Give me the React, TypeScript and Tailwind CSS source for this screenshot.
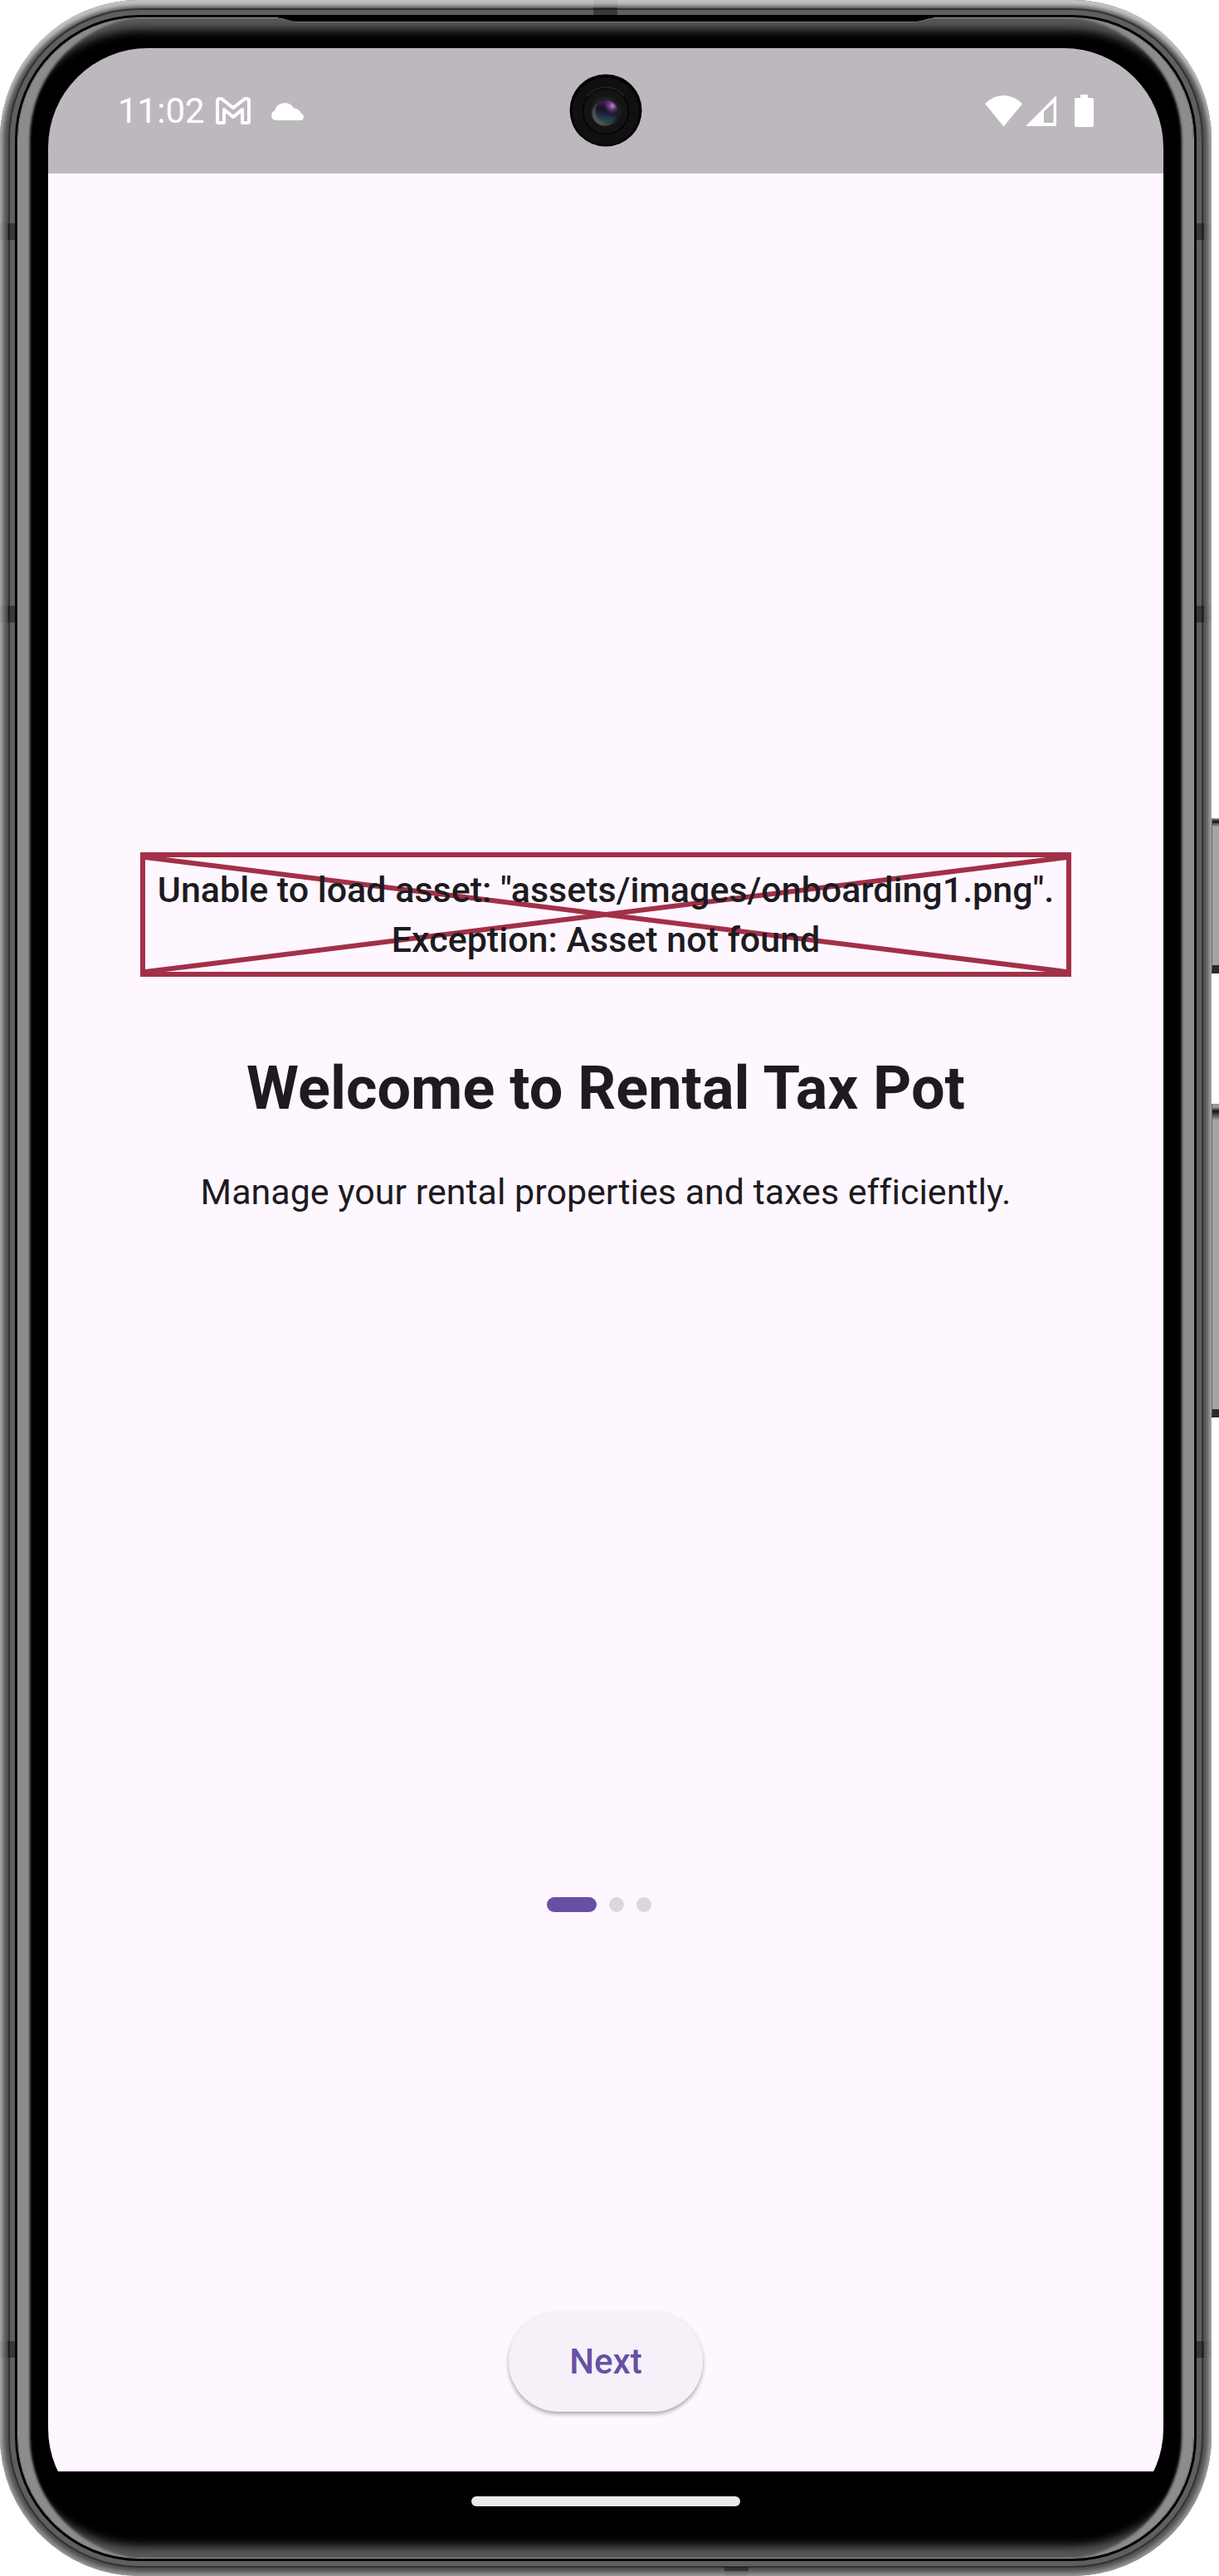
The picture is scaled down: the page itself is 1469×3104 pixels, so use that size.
import React from "react";

function GmailIcon() {
  return (
    <svg viewBox="0 0 42 34" className="h-[34px] w-[42px]" fill="none" stroke="currentColor" strokeWidth="4" strokeLinejoin="round" aria-label="Gmail">
      <path d="M2 5Q2 2 5 2H7L21 13L35 2H37Q40 2 40 5V30Q40 31 38 31H32V15L21 24L10 15V31H4Q2 31 2 30Z" />
    </svg>
  );
}

function CloudIcon() {
  return (
    <svg viewBox="0 0 42 24" className="h-6 w-[42px]" fill="currentColor" aria-label="Cloud">
      <path d="M6 23A6 6 0 0 1 5 11.500A12.500 12.500 0 0 1 28 8.500A9 9 0 0 1 37 15A4.200 4.200 0 0 1 37 23Z" />
    </svg>
  );
}

function WifiIcon() {
  return (
    <svg viewBox="0 0 45 39" className="h-[39px] w-[45px]" fill="currentColor" aria-label="Wi-Fi">
      <path d="M0 11Q10 1 22.500 1Q35 1 45 11L22.500 38.500Z" />
    </svg>
  );
}

function SignalIcon() {
  return (
    <svg viewBox="0 0 38 38" className="h-[37px] w-[37px]" fill="currentColor" fillRule="evenodd" aria-label="Signal">
      <path d="M0 38L38 0V38ZM22.500 20V34H34.500V9Z" />
    </svg>
  );
}

function BatteryIcon() {
  return (
    <svg viewBox="0 0 23 39" className="h-[39px] w-[23px]" fill="currentColor" aria-label="Battery">
      <path d="M7 0H16V4H21Q23 4 23 6V37Q23 39 21 39H2Q0 39 0 37V6Q0 4 2 4H7Z" />
    </svg>
  );
}

function Camera() {
  return (
    <svg viewBox="0 0 88 88" className="h-[88px] w-[88px]" aria-hidden="true">
      <defs>
        <radialGradient id="ring">
          <stop offset="0.55" stopColor="#2c2c2c" />
          <stop offset="1" stopColor="#131313" />
        </radialGradient>
        <linearGradient id="barrel" x1="0" y1="1" x2="1" y2="0">
          <stop offset="0" stopColor="#6a6a6a" />
          <stop offset="0.6" stopColor="#222" />
          <stop offset="1" stopColor="#1a1a1a" />
        </linearGradient>
        <linearGradient id="lens" x1="0.6" y1="0" x2="0.4" y2="1">
          <stop offset="0" stopColor="#4a2658" />
          <stop offset="0.45" stopColor="#1a1028" />
          <stop offset="1" stopColor="#1f4f62" />
        </linearGradient>
        <radialGradient id="glint" cx="0.76" cy="0.26" r="0.36">
          <stop offset="0" stopColor="#d497e6" stopOpacity="0.9" />
          <stop offset="0.5" stopColor="#9a56b4" stopOpacity="0.5" />
          <stop offset="1" stopColor="#9a56b4" stopOpacity="0" />
        </radialGradient>
      </defs>
      <circle cx="44" cy="44" r="43.500" fill="#000" />
      <circle cx="44" cy="45" r="40.500" fill="#101010" />
      <circle cx="44" cy="45" r="27.500" fill="#141414" stroke="#060606" strokeWidth="2" />
      <path d="M22 27A28 28 0 0 1 66 27" fill="none" stroke="#262626" strokeWidth="1.500" />
      <circle cx="44" cy="45" r="20" fill="url(#ring)" />
      <circle cx="43" cy="47" r="15.500" fill="url(#barrel)" />
      <circle cx="45" cy="45" r="13" fill="url(#lens)" />
      <circle cx="45" cy="45" r="13" fill="url(#glint)" />
    </svg>
  );
}

function StatusBar() {
  return (
    <header className="relative flex h-[151px] shrink-0 items-center justify-between bg-[#bdb8be] pl-[84px] pr-[84px] text-white">
      <div className="flex items-center">
        <time className="w-[118px] text-[42px] leading-[48px]">11:02</time>
        <GmailIcon />
        <span className="ml-6 flex">
          <CloudIcon />
        </span>
      </div>
      <div className="flex items-center">
        <WifiIcon />
        <span className="ml-1 mr-[22px] flex">
          <SignalIcon />
        </span>
        <BatteryIcon />
      </div>
      <div className="absolute inset-x-0 top-[31px] flex justify-center">
        <Camera />
      </div>
    </header>
  );
}

function MissingAsset() {
  return (
    <div className="relative w-full whitespace-nowrap border-[6px] border-[#a23048] py-[9px] text-center text-[43px] font-medium leading-[60px]">
      <svg className="absolute inset-0 h-full w-full" viewBox="0 0 1110 138" preserveAspectRatio="none" stroke="#a23048" strokeWidth="6" aria-hidden="true">
        <path d="M0 0L1110 138M1110 0L0 138" />
      </svg>
      <p className="relative">
        Unable to load asset: "assets/images/onboarding1.png".
        <br />
        Exception: Asset not found
      </p>
    </div>
  );
}

function PageDots() {
  return (
    <div className="flex items-center gap-[15px] pr-4" role="group" aria-label="Page 1 of 3">
      <span className="h-[18px] w-[60px] rounded-full bg-[#6750a4]" />
      <span className="h-[18px] w-[18px] rounded-full bg-[#d8d8d8]" />
      <span className="h-[18px] w-[18px] rounded-full bg-[#d8d8d8]" />
    </div>
  );
}

function Screen() {
  return (
    <div className="relative flex flex-1 flex-col overflow-hidden rounded-[120px] bg-black">
      <StatusBar />
      <main className="flex flex-1 flex-col items-center bg-[#fef7ff] px-[111px] pt-[818px] text-[#1d1b20]">
        <MissingAsset />
        <h1 className="mt-[99px] text-center text-[72px] font-bold leading-[72px]">Welcome to Rental Tax Pot</h1>
        <p className="mt-[58px] text-center text-[43px] leading-[60px] [font-variant-ligatures:none]">
          Manage your rental properties and taxes efficiently.
        </p>
        <div className="mt-[820px]">
          <PageDots />
        </div>
        <button
          type="button"
          className="mb-[72px] mt-auto h-[121px] w-[234px] rounded-full bg-[#f6f1f9] text-[42px] font-medium text-[#6750a4] shadow-[0_3px_5px_rgba(0,0,0,0.32)]"
        >
          Next
        </button>
      </main>
      <footer className="flex h-[68px] shrink-0 justify-center pt-[30px]">
        <span className="h-3 w-[324px] rounded-full bg-[#eaeaea]" />
      </footer>
    </div>
  );
}

function EarpieceSlot() {
  return (
    <svg className="absolute left-1/2 top-[20px] -ml-[395px] h-[7px] w-[790px]" viewBox="0 0 790 7" aria-hidden="true">
      <path d="M0 0V2Q5 2 10 4T22 7H768Q774 6 780 4T790 2V0Z" fill="#000" />
      <path d="M0 2Q5 2 10 4T22 6.500H768Q774 6 780 4T790 2" fill="none" stroke="#777" />
    </svg>
  );
}

function SideKey({ className }: { className: string }) {
  return (
    <span
      className={
        "absolute right-0 w-[9px] border-b-[10px] border-l border-b-[#2b2b2b] border-l-[#666] " + className
      }
    />
  );
}

function AntennaBand({ className }: { className: string }) {
  return <span className={"absolute from-black/5 from-50% to-black/40 to-50% " + className} />;
}

export default function App() {
  return (
    <div className="relative flex min-h-screen bg-white pr-[9px] font-[Roboto,sans-serif]">
      <SideKey className="top-[986px] h-[187px] bg-[linear-gradient(#999_0px,#111_4px,#a4a4a4_10px)]" />
      <SideKey className="top-[1330px] h-[378px] bg-[linear-gradient(#999_4px,#111_9px,#a4a4a4_20px)]" />
      <div className="relative flex flex-1 rounded-[168px] bg-[#4a4a4a] p-[10px] shadow-[inset_0_8px_6px_-1px_#c4c4c4,inset_0_0_7px_4px_#a2a2a2]">
        <div className="flex flex-1 rounded-[158px] border-2 border-[#333] bg-[#5f5f5f] p-[6px]">
          <div className="flex flex-1 rounded-[150px] border-[3px] border-black bg-black">
            <div className="flex flex-1 rounded-[147px] border border-[#999] bg-black p-9 shadow-[inset_16px_0_3px_-2px_#8c8c8c,inset_-16px_0_3px_-2px_#8c8c8c,inset_0_20px_12px_-6px_#585858,inset_0_-20px_12px_-6px_#585858]">
              <Screen />
            </div>
          </div>
        </div>
        <EarpieceSlot />
        <AntennaBand className="left-0 top-[269px] h-5 w-[18px] bg-linear-to-r" />
        <AntennaBand className="left-0 top-[730px] h-5 w-[18px] bg-linear-to-r" />
        <AntennaBand className="bottom-[263px] left-0 h-5 w-[18px] bg-linear-to-r" />
        <AntennaBand className="right-0 top-[269px] h-5 w-[18px] bg-linear-to-l" />
        <AntennaBand className="right-0 top-[730px] h-5 w-[18px] bg-linear-to-l" />
        <AntennaBand className="bottom-[263px] right-0 h-5 w-[18px] bg-linear-to-l" />
        <AntennaBand className="left-[715px] top-0 h-[18px] w-[29px] bg-linear-to-b" />
        <AntennaBand className="bottom-0 left-[873px] h-[11px] w-[29px] bg-linear-to-t" />
      </div>
    </div>
  );
}
